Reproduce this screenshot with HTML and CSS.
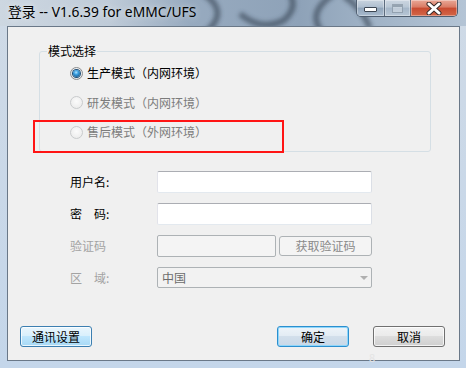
FILE: index.html
```html
<!doctype html>
<html>
<head>
    <meta charset="utf-8">
    <link rel="stylesheet" href="styles.css">
</head>
<body>
    <div class="window">
        <div class="titlebar">
            <svg class="title-bg" width="466" height="26" viewBox="0 0 466 26">
                <defs>
                    <filter id="soft" x="-20%" y="-50%" width="140%" height="200%">
                        <feGaussianBlur stdDeviation="2.2"/>
                    </filter>
                </defs>
                <g fill="none" stroke="#2c3846" stroke-width="6" opacity="0.55" filter="url(#soft)">
                    <path d="M204 -6 Q230 12 206 32"/>
                    <path d="M240 14 Q262 32 284 20 Q298 8 290 -6"/>
                    <path d="M334 -6 Q306 12 322 32"/>
                    <path d="M344 -4 Q362 8 370 28"/>
                </g>
            </svg>
            <span class="title">登录 -- V1.6.39 for eMMC/UFS</span>
            <div class="caps">
                <span class="cap min"><i></i></span>
                <span class="cap max"><i></i></span>
                <span class="cap close">
                    <svg width="16" height="13" viewBox="0 0 16 13">
                        <path d="M3 2 L13 11 M13 2 L3 11" stroke="#3a2a28" stroke-width="5" stroke-linecap="round"/>
                        <path d="M3 2 L13 11 M13 2 L3 11" stroke="#fff" stroke-width="3" stroke-linecap="round"/>
                    </svg>
                </span>
            </div>
        </div>

        <div class="client">
            <fieldset class="group">
                <legend>模式选择</legend>
                <label class="radio checked"><span class="dot"></span>生产模式（内网环境）</label>
                <label class="radio off"><span class="dot"></span>研发模式（内网环境）</label>
                <label class="radio off"><span class="dot"></span>售后模式（外网环境）</label>
            </fieldset>

            <div class="form">
                <span class="lbl">用户名:</span>
                <span class="input"></span>

                <span class="lbl">密　码:</span>
                <span class="input"></span>

                <span class="lbl off">验证码</span>
                <span class="captcha">
                    <span class="input dis"></span>
                    <span class="btn-dis">获取验证码</span>
                </span>

                <span class="lbl off">区　域:</span>
                <span class="combo">中国<i class="arrow"></i></span>
            </div>

            <div class="actions">
                <span class="btn hot">通讯设置</span>
                <span class="btn default">确定</span>
                <span class="btn">取消</span>
            </div>

            <div class="mark"></div>
            <span class="ghost">8</span>
        </div>
    </div>
</body>
</html>
```

FILE: styles.css
```css
* {
    margin: 0;
    padding: 0;
    box-sizing: border-box;
}
body {
    width: 466px;
    height: 368px;
    overflow: hidden;
    font-family: "Noto Sans CJK SC", sans-serif;
    font-size: 12px;
}

.window {
    width: 466px;
    height: 368px;
    background: linear-gradient(#cfdae6, #c4d6ea);
}

/* title bar */
.titlebar {
    position: relative;
    height: 26px;
    display: flex;
    align-items: flex-start;
    background: linear-gradient(to right, #cdd7e1 0, #bfcbd8 110px, #97aabf 190px, #8ea2b8 300px, #9db0c4 360px, #b4c4d5 466px);
}
.title-bg {
    position: absolute;
    left: 0;
    top: 0;
}
.title {
    position: relative;
    padding-left: 8px;
    line-height: 24px;
    font-family: "Noto Sans", "Noto Sans CJK SC", sans-serif;
    font-size: 13.8px;
    color: #000;
    text-shadow: 0 0 6px rgba(255,255,255,.7);
}
.caps {
    position: relative;
    margin-left: auto;
    margin-right: 8px;
    height: 17px;
    display: flex;
    border: 1px solid #4f5e70;
    border-top: none;
    border-radius: 0 0 5px 5px;
    overflow: hidden;
}
.cap {
    display: flex;
    align-items: center;
    justify-content: center;
    height: 100%;
    border-right: 1px solid #5d6c7e;
    box-shadow: inset 0 0 0 1px rgba(255,255,255,.35);
}
.cap.min {
    width: 28px;
    background: linear-gradient(#c9d4df, #aebecf 45%, #91a5ba 50%, #a9bbce);
}
.cap.min i {
    width: 13px;
    height: 5px;
    margin-top: 3px;
    background: #fff;
    border: 1px solid #3c4652;
    border-radius: 1px;
}
.cap.max {
    width: 26px;
    background: linear-gradient(#ccd6e1, #b9c7d5 45%, #a5b6c8 50%, #b8c7d6);
}
.cap.max i {
    width: 11px;
    height: 9px;
    border: 1px solid #8d9aa8;
    border-top-width: 3px;
    background: rgba(255,255,255,.35);
    opacity: .8;
}
.cap.close {
    width: 46px;
    border-right: none;
    background: linear-gradient(#e9a897, #d97a64 45%, #c84a30 50%, #d36748);
}

/* client area */
.client {
    position: relative;
    margin: 0 6px 0 7px;
    height: 335px;
    border: 1px solid #6a7888;
    background: #f0f0f0;
}

.group {
    margin: 16px 28px 0 31px;
    padding: 6px 0 11px 0;
    border: 1px solid #d5dfe5;
    border-radius: 3px;
    display: flex;
    flex-direction: column;
    gap: 13.5px;
}
.group legend {
    margin-left: 7px;
    padding: 0 1px;
    line-height: 16px;
    font-size: 12px;
    color: #000;
}

.radio {
    display: flex;
    align-items: center;
    gap: 4px;
    height: 16px;
    margin-left: 30px;
    line-height: 16px;
    color: #000;
}
.radio.off {
    color: #7c7c7c;
}
.dot {
    width: 13px;
    height: 13px;
    border-radius: 50%;
    border: 1px solid #c9cbcd;
    background: radial-gradient(circle at 50% 40%, #fbfbfb, #e8e8e8);
    display: flex;
    align-items: center;
    justify-content: center;
}
.radio.checked .dot {
    border-color: #8a8c8e;
    background: radial-gradient(circle at 50% 40%, #ffffff, #dcdcdc);
}
.radio.checked .dot::after {
    content: "";
    width: 7px;
    height: 7px;
    border-radius: 50%;
    background: radial-gradient(circle at 45% 35%, #aee3ff 0, #3b9fe0 35%, #175c92 80%);
    box-shadow: 0 0 0 1px #1e4f78;
}

/* form */
.form {
    margin: 19px 0 0 62px;
    display: grid;
    grid-template-columns: 87px 215px;
    grid-auto-rows: 22px;
    row-gap: 10px;
}
.lbl {
    align-self: center;
    line-height: 16px;
    color: #000;
}
.lbl.off {
    color: #a3a3a3;
}
.input {
    display: block;
    height: 22px;
    background: #fff;
    border: 1px solid;
    border-color: #abadb3 #dbdfe6 #e3e9ef #e2e3ea;
    border-radius: 2px;
}
.input.dis {
    width: 119px;
    background: #f4f4f4;
    border-color: #adb2b5;
}
.captcha {
    display: flex;
    align-items: center;
    gap: 3px;
}
.btn-dis {
    width: 93px;
    height: 20px;
    line-height: 18px;
    text-align: center;
    background: #f4f4f4;
    border: 1px solid #adb2b5;
    border-radius: 3px;
    color: #8a8a8a;
}
.combo {
    position: relative;
    height: 21px;
    line-height: 19px;
    padding-left: 4px;
    background: #f2f2f2;
    border: 1px solid #adb2b5;
    border-radius: 2px;
    color: #6d6d6d;
}
.arrow {
    position: absolute;
    right: 3px;
    top: 8px;
    border-left: 4px solid transparent;
    border-right: 4px solid transparent;
    border-top: 4px solid #b0b0b0;
}

/* buttons */
.actions {
    display: flex;
    margin-top: 37px;
    padding: 0 14px 0 12px;
}
.btn {
    width: 72px;
    height: 21px;
    line-height: 19px;
    text-align: center;
    color: #000;
    border: 1px solid #707070;
    border-radius: 3px;
    background: linear-gradient(#f2f2f2, #ebebeb 45%, #dddddd 50%, #cfcfcf);
    box-shadow: inset 0 0 0 1px rgba(255,255,255,.75);
}
.btn.hot {
    border-color: #3c7fb1;
    background: linear-gradient(#eaf6fd, #d9f0fc 45%, #bee6fd 50%, #a7d9f5);
}
.btn.default {
    margin-left: auto;
    margin-right: 24px;
    border-color: #2b8fcf;
    background: linear-gradient(#eef4f9, #e3ecf4 45%, #d2dfeb 50%, #c8d8e8);
    box-shadow: inset 0 0 0 1px #8fd6fa;
}

/* red annotation frame */
.mark {
    position: absolute;
    left: 25px;
    top: 93px;
    width: 251px;
    height: 33px;
    border: 2px solid #ff1414;
}
.ghost {
    position: absolute;
    left: 361px;
    top: 322px;
    font-size: 11px;
    color: #e4e4e4;
}
```
